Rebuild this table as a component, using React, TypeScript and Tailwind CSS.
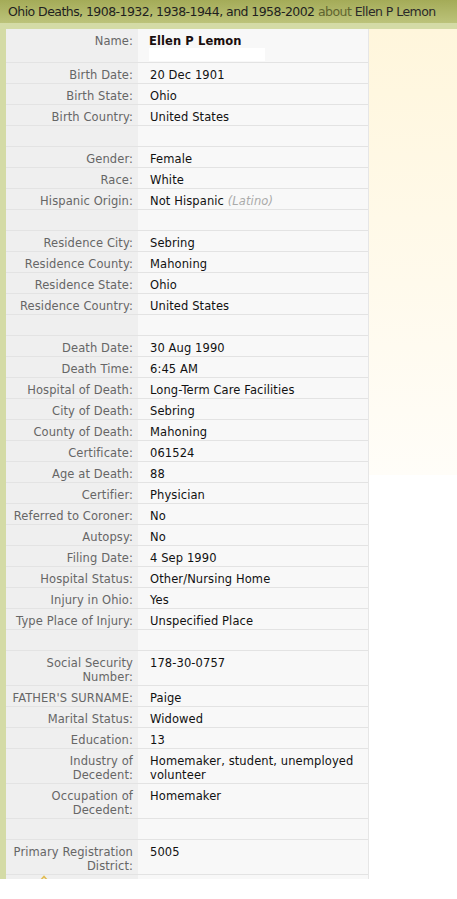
import React from "react";

type Row = { label?: string; value?: React.ReactNode; last?: boolean };

const rows: Row[] = [
  { label: "Birth Date:", value: "20 Dec 1901" },
  { label: "Birth State:", value: "Ohio" },
  { label: "Birth Country:", value: "United States" },
  {},
  { label: "Gender:", value: "Female" },
  { label: "Race:", value: "White" },
  {
    label: "Hispanic Origin:",
    value: (
      <>
        Not Hispanic <i className="text-[#aaaaaa]">(Latino)</i>
      </>
    ),
  },
  {},
  { label: "Residence City:", value: "Sebring" },
  { label: "Residence County:", value: "Mahoning" },
  { label: "Residence State:", value: "Ohio" },
  { label: "Residence Country:", value: "United States" },
  {},
  { label: "Death Date:", value: "30 Aug 1990" },
  { label: "Death Time:", value: "6:45 AM" },
  { label: "Hospital of Death:", value: "Long-Term Care Facilities" },
  { label: "City of Death:", value: "Sebring" },
  { label: "County of Death:", value: "Mahoning" },
  { label: "Certificate:", value: "061524" },
  { label: "Age at Death:", value: "88" },
  { label: "Certifier:", value: "Physician" },
  { label: "Referred to Coroner:", value: "No" },
  { label: "Autopsy:", value: "No" },
  { label: "Filing Date:", value: "4 Sep 1990" },
  { label: "Hospital Status:", value: "Other/Nursing Home" },
  { label: "Injury in Ohio:", value: "Yes" },
  { label: "Type Place of Injury:", value: "Unspecified Place" },
  {},
  { label: "Social Security\nNumber:", value: "178-30-0757" },
  { label: "FATHER'S SURNAME:", value: "Paige" },
  { label: "Marital Status:", value: "Widowed" },
  { label: "Education:", value: "13" },
  { label: "Industry of\nDecedent:", value: "Homemaker, student, unemployed\nvolunteer" },
  { label: "Occupation of\nDecedent:", value: "Homemaker" },
  {},
  { label: "Primary Registration\nDistrict:", value: "5005" },
  { last: true },
];

function RecordRow({ label, value, last }: Row) {
  return (
    <div className="flex border-b border-[#e3e3e3]">
      <div className="w-[132px] shrink-0 bg-[#efefef] pl-[4px] pr-[5px] pt-[5px] pb-[1px] text-right text-[#666666] min-h-[20px] whitespace-pre-line">
        {last ? (
          <div className="-mt-[5px] pl-[29px] text-left leading-none">
            <svg width="10" height="6" viewBox="0 0 10 6" className="block">
              <path d="M1 6 L5 1.5 L9 6" fill="none" stroke="#e2bd55" strokeWidth="1.6" />
            </svg>
          </div>
        ) : (
          label
        )}
      </div>
      <div className="flex-1 bg-[#f8f8f8] pl-[12px] pr-[8px] pt-[5px] pb-[1px] text-[#111111] whitespace-pre-line">
        {value}
      </div>
    </div>
  );
}

export default function App() {
  return (
    <div
      className="w-[457px] h-[899px] bg-white overflow-hidden"
      style={{ fontFamily: '"DejaVu Sans", Verdana, sans-serif' }}
    >
      <div className="h-[23px] bg-gradient-to-b from-[#a4ab58] to-[#bcc37a] pl-[8px] text-[12.5px] leading-[24px] text-[#1f1f1f] whitespace-nowrap tracking-[-0.55px]">
        Ohio Deaths, 1908-1932, 1938-1944, and 1958-2002{" "}
        <span className="text-[#5f6430]">about</span>{" "}
        <span className="text-[#2a2a2a]">Ellen P Lemon</span>
      </div>
      <div className="h-[6px] bg-[#d4dba6]" />
      <div className="flex h-[850px] overflow-hidden">
        <div className="w-[6px] shrink-0 bg-[#d4dba6]" />
        <div className="w-[363px] shrink-0 border-r border-[#e6e6e6] text-[11.5px] leading-[14px] tracking-[0.1px]">
          <div className="flex border-b border-[#e3e3e3]">
            <div className="w-[132px] shrink-0 bg-[#efefef] pr-[5px] pt-[5px] text-right text-[#666666]">
              Name:
            </div>
            <div className="flex-1 bg-[#f8f8f8] pl-[11px] pt-[5px] pb-[1px]">
              <div className="font-bold text-[#1a0e0e]">Ellen P Lemon</div>
              <div className="h-[13px] w-[116px] bg-white" />
            </div>
          </div>
          {rows.map((r, i) => (
            <RecordRow key={i} {...r} />
          ))}
        </div>
        <div className="flex-1 h-[446px] bg-gradient-to-b from-[#fff6dc] to-[#fffdf8]" />
      </div>
    </div>
  );
}
